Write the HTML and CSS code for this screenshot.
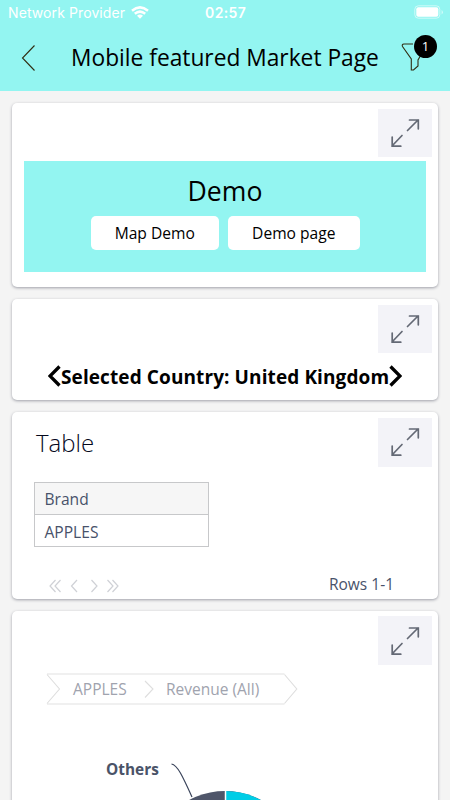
FILE: index.html
```html
<!DOCTYPE html>
<html lang="en">
<head>
<meta charset="utf-8">
<title>Mobile featured Market Page</title>
<link rel="stylesheet" href="styles.css">
</head>
<body>
<svg class="defs" width="0" height="0" aria-hidden="true">
  <symbol id="expand" viewBox="0 0 54 48">
    <path d="M29.5 21.5 40 11M31.5 11H40.3V19.8M24 26.5 14 37M14.2 28V37.2H22.8" fill="none" stroke="#646975" stroke-width="1.700" stroke-linecap="round"/>
  </symbol>
</svg>
<header class="top">
  <div class="status">
    <span class="carrier">Network Provider</span>
    <svg class="wifi" viewBox="0 0 18 13"><g fill="none" stroke="#fff" stroke-width="2.5"><path d="M1 4.7Q9-2 17 4.7"/><path d="M3.8 7.8Q9 3.4 14.2 7.8"/></g><path d="M6 9.7Q9 7.4 12 9.7L9 12.8Z" fill="#fff"/></svg>
    <span class="clock">02:57</span>
    <svg class="battery" viewBox="0 0 30 15"><rect x=".8" y=".8" width="25" height="12.4" rx="3.5" fill="none" stroke="#fff" stroke-opacity=".55"/><rect x="2.3" y="2.3" width="22" height="9.4" rx="2" fill="#fff"/><path d="M27.6 5v4.5q1.3-.8 1.3-2.2T27.6 5" fill="#fff" fill-opacity=".6"/></svg>
  </div>
  <div class="nav">
    <svg class="back" viewBox="0 0 14 28"><path d="M13.500 1.500 1.500 14 13.500 26.500" fill="none" stroke="#302d12" stroke-width="1.1"/></svg>
    <h1>Mobile featured Market Page</h1>
    <div class="filter">
      <svg viewBox="0 0 22 30"><path d="M12 2H3Q.5 2.3 1.5 4.5L10.3 17V28H12.500L17 24V18L20.500 12" fill="none" stroke="#302d12" stroke-width="1.1"/></svg>
      <span class="badge">1</span>
    </div>
  </div>
</header>
<main>
  <section class="card demo">
    <button class="expand" aria-label="Expand"><svg><use href="#expand"/></svg></button>
    <div class="banner">
      <h2>Demo</h2>
      <div class="actions"><button class="map">Map Demo</button><button class="page">Demo page</button></div>
    </div>
  </section>
  <section class="card country">
    <button class="expand" aria-label="Expand"><svg><use href="#expand"/></svg></button>
    <div class="picker">
      <svg viewBox="0 0 13 22"><path d="M11.500 1.500 2 11 11.500 20.500" fill="none" stroke="#000" stroke-width="3.300"/></svg>
      <strong>Selected Country: United Kingdom</strong>
      <svg viewBox="0 0 13 22"><path d="M1.500 1.500 11 11 1.500 20.500" fill="none" stroke="#000" stroke-width="3.300"/></svg>
    </div>
  </section>
  <section class="card tablecard">
    <button class="expand" aria-label="Expand"><svg><use href="#expand"/></svg></button>
    <h2>Table</h2>
    <table><thead><tr><th><span>Brand</span></th></tr></thead><tbody><tr><td><span>APPLES</span></td></tr></tbody></table>
    <div class="pager">
      <svg viewBox="0 0 70 14"><path d="M6.500 1 1 7 6.500 13M11.500 1 6 7 11.500 13M28 1 22.500 7 28 13M42.500 1 48 7 42.500 13M58.500 1 64 7 58.500 13M63.500 1 69 7 63.500 13" fill="none" stroke="#cfd1d6" stroke-width="1.200"/></svg>
      <span>Rows 1-1</span>
    </div>
  </section>
  <section class="card chartcard">
    <button class="expand" aria-label="Expand"><svg><use href="#expand"/></svg></button>
    <nav class="crumbs">
      <svg viewBox="0 0 252 32"><path d="M1 1H238.500M238.500 31H1" stroke="#ebebeb" stroke-width="1.700"/><path d="M1 1.500 13.500 16 1 30.500M238.500 1.500 250.800 16 238.500 30.500M99 8 107 16 99 24.500" fill="none" stroke="#dedede" stroke-width="1.100"/></svg>
      <span class="first">APPLES</span><span class="second">Revenue (All)</span>
    </nav>
    <div class="chart">
      <span>Others</span>
      <svg viewBox="0 0 180 50"><path d="M4.500 14C10.500 15 15.500 26 25 47" fill="none" stroke="#39435a" stroke-width="1.200"/><circle cx="58" cy="117" r="76" fill="#4f566a"/><path d="M58.500 117V41A76 76 0 0 1 134 117Z" fill="#00cde6"/><path d="M58.500 40V50" stroke="#fff" stroke-width="1.500"/></svg>
    </div>
  </section>
</main>
</body>
</html>
```
FILE: styles.css
```css
* { box-sizing: border-box; }
html, body { height: 100%; overflow: hidden; }
body { display: flex; flex-direction: column; margin: 0; background: #f4f4f4; color: #000; font-family: "Open Sans", sans-serif; font-weight: 400; }
.defs { position: absolute; }
h1, h2 { margin: 0; font-weight: 400; }
svg { display: block; flex: none; }
button { border: 0; padding: 0; font: inherit; color: inherit; }
span, strong, h1, h2 { white-space: nowrap; }

.top { flex: none; height: 91px; background: #93f5f1; }
.status { display: flex; height: 25px; color: #fff; font: 14px/25px Inter, sans-serif; }
.carrier { width: 123px; margin-left: 8px; letter-spacing: .1px; }
.wifi { width: 18px; height: 13px; margin-top: 6px; }
.clock { width: 42px; margin-left: 56px; font-weight: 600; letter-spacing: .4px; }
.battery { width: 30px; height: 15px; margin: 5px 0 0 167px; }
.nav { display: flex; height: 66px; }
.back { width: 14px; height: 28px; margin: 19px 0 0 21px; }
h1 { width: 310px; margin-left: 36px; font-size: 22.750px; line-height: 66px; }
.filter { position: relative; width: 36px; margin-left: 20px; padding-top: 17px; }
.filter svg { width: 22px; height: 30px; }
.badge { position: absolute; left: 13px; top: 10px; width: 23px; height: 23px; border-radius: 50%; background: #000; color: #fff; font-size: 13px; line-height: 22px; text-align: center; }

main { display: flex; flex: 1; min-height: 0; overflow: hidden; flex-direction: column; gap: 12px; padding: 12px 12px 0; }
.card { position: relative; flex: none; background: #fff; border-radius: 5px; box-shadow: 0 1px 3px rgba(40, 44, 65, .42); }
.expand { display: block; width: 54px; height: 48px; margin-left: auto; margin-right: 6px; background: #f3f3f8; }
.expand svg { width: 54px; height: 48px; }

.demo { height: 184px; padding-top: 6px; }
.banner { height: 110.500px; margin: 4px 12px 0; background: #93f5f1; text-align: center; }
.banner h2 { font-size: 26.600px; line-height: 55px; height: 55px; padding-top: 3px; }
.actions { display: flex; justify-content: center; gap: 9px; }
.actions button { height: 34px; border-radius: 5px; background: #fff; font-size: 15.600px; line-height: 34px; white-space: nowrap; }
.map { width: 128.500px; }
.page { width: 131.500px; }

.country { height: 101px; padding-top: 6px; }
.picker { display: flex; height: 22px; margin: 12px 0 0 36px; }
.picker svg { width: 13px; height: 22px; }
.picker strong { width: 328px; font-size: 19px; line-height: 25px; letter-spacing: .1px; }

.tablecard { height: 187px; color: #48526a; }
.tablecard .expand { position: absolute; top: 5.500px; right: 6px; height: 49px; margin: 0; }
.tablecard h2 { height: 70px; padding-left: 24px; font-size: 24px; font-weight: 300; line-height: 62px; color: #05081c; }
table { width: 175.500px; margin-left: 21.500px; border-collapse: collapse; font-size: 15.600px; line-height: 30px; }
th, td { height: 32px; padding: 0 0 0 10px; border: 1px solid #c7c8ca; text-align: left; font-weight: 400; }
th { background: #f6f6f6; }
td { padding-top: 2px; line-height: 28px; }
.pager { display: flex; align-items: center; justify-content: space-between; padding: 0 44px 0 37px; margin-top: 25px; font-size: 15.500px; line-height: 24px; }
.pager svg { width: 70px; height: 14px; margin-top: 4px; }

.chartcard { height: 300px; padding-top: 5px; }
.chartcard .expand { height: 49px; }
.crumbs { position: relative; display: flex; width: 252px; height: 32px; margin: 8px 0 0 34px; color: #a0a3ae; font-size: 15.500px; line-height: 32px; }
.crumbs svg { position: absolute; left: 0; top: 0; width: 252px; height: 32px; }
.first { width: 93px; margin-left: 27px; }
.chart { display: flex; height: 50px; margin: 45px 0 0 94px; color: #4a5368; font-size: 15.400px; font-weight: 700; line-height: 39px; }
.chart span { width: 61px; }
.chart svg { width: 180px; height: 50px; }
```
